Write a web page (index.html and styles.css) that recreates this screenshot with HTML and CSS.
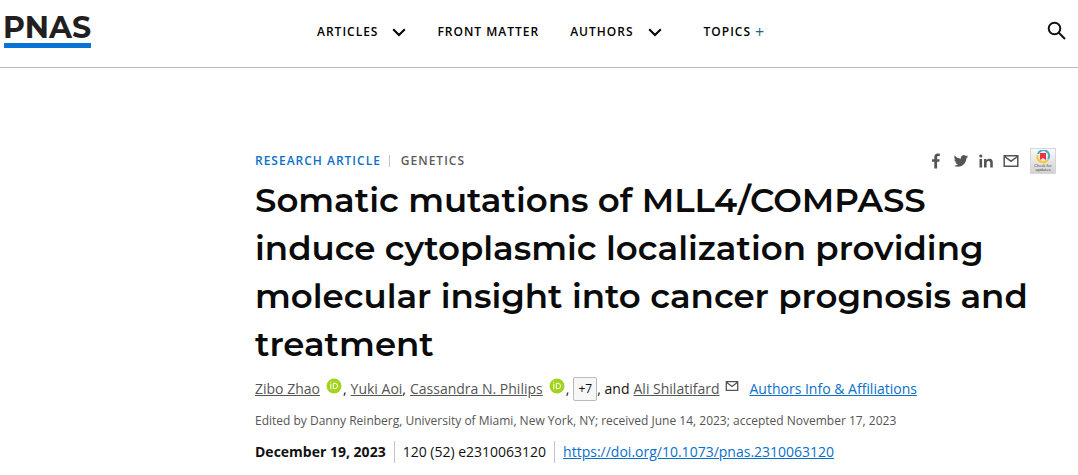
FILE: index.html
```html
<!DOCTYPE html>
<html lang="en">
<head>
<meta charset="utf-8">
<meta name="viewport" content="width=device-width, initial-scale=1">
<title>Somatic mutations of MLL4/COMPASS | PNAS</title>
<link rel="stylesheet" href="styles.css">
</head>
<body>
<header class="site-header">
  <a class="logo" href="#">PNAS</a>
  <nav class="main-nav" aria-label="Main">
    <button class="nav-item" type="button">ARTICLES
      <svg class="chevron" viewBox="0 0 14 9" aria-hidden="true"><path d="M1.200 1.200 7 7l5.800-5.800"/></svg>
    </button>
    <a class="nav-item" href="#">FRONT MATTER</a>
    <button class="nav-item" type="button">AUTHORS
      <svg class="chevron" viewBox="0 0 14 9" aria-hidden="true"><path d="M1.200 1.200 7 7l5.800-5.800"/></svg>
    </button>
    <button class="nav-item topics" type="button">TOPICS <span class="plus">+</span></button>
  </nav>
  <button class="search" type="button" aria-label="Search">
    <svg viewBox="0 0 20 20" aria-hidden="true"><circle cx="7.500" cy="7.500" r="5.800"/><path d="M11.800 11.800 18 18"/></svg>
  </button>
</header>
<main class="article">
  <div class="meta">
    <div class="labels">
      <a class="type" href="#">RESEARCH ARTICLE</a>
      <a class="subject" href="#">GENETICS</a>
    </div>
    <div class="share">
      <a href="#" aria-label="Facebook"><svg viewBox="0 0 16 16" aria-hidden="true"><path d="M6.300 15.500V8.800H4V6.300h2.300V4.200C6.300 1.900 7.700.6 9.800.6c.9 0 1.700.1 2 .2v2.300h-1.300c-1.100 0-1.400.6-1.400 1.400v1.800h2.600l-.4 2.500H9.100v6.700z"/></svg></a>
      <a href="#" aria-label="Twitter"><svg viewBox="0 0 16 16" aria-hidden="true"><path d="M15.200 3.400c-.5.3-1.100.4-1.700.5.600-.4 1.100-1 1.300-1.700-.6.400-1.200.6-1.900.8a3 3 0 0 0-5.100 2.700C5.300 5.600 3.100 4.400 1.700 2.600c-.8 1.400-.4 3.100.9 4-.5 0-.9-.2-1.300-.4 0 1.500 1 2.700 2.400 3-.5.1-.9.100-1.300 0 .4 1.200 1.500 2.100 2.800 2.100A6.100 6.100 0 0 1 .8 12.600c4.900 3 12.200.1 12.700-7.600.7-.4 1.300-1 1.700-1.600z"/></svg></a>
      <a href="#" aria-label="LinkedIn"><svg viewBox="0 0 16 16" aria-hidden="true"><circle cx="2.800" cy="3" r="1.600"/><path d="M1.500 6h2.600v8.500H1.500zM6 6h2.500v1.200c.5-.9 1.500-1.500 2.800-1.500 2.700 0 3.500 1.500 3.500 4v4.800h-2.600v-4.400c0-1.200-.2-2.200-1.600-2.200-1.500 0-2 1-2 2.300v4.300H6z"/></svg></a>
      <a href="#" aria-label="Email"><svg class="mail" viewBox="0 0 16 16" aria-hidden="true"><path d="M1.200 2.700h13.600v10.600H1.200zM1.500 3.500 8 8.200l6.500-4.700"/></svg></a>
      <button class="crossmark" type="button">
        <svg viewBox="0 0 16 14" aria-hidden="true"><path class="ring-blue" d="M3 4A5.700 5.700 0 1 1 13 9.200"/><path class="ring-yellow" d="M12.800 9.700A5.700 5.700 0 0 1 2.600 5"/><path class="mark" d="M5 3h6v7L8 7.900 5 10z"/></svg>
        <span>Check for<br>updates</span>
      </button>
    </div>
  </div>
  <h1>Somatic mutations of MLL4/COMPASS induce cytoplasmic localization providing molecular insight into cancer prognosis and treatment</h1>
  <div class="authors">
    <span class="author"><a href="#">Zibo Zhao</a><a class="orcid" href="#" aria-label="Zibo Zhao ORCID"><svg viewBox="0 0 16 16" aria-hidden="true"><circle cx="8" cy="8" r="7.500"/><path d="M4.800 5.800v5.400M7.300 5.300v5.400h1.500c3.600 0 3.600-5.400 0-5.400zM4.800 3.600v1"/></svg></a>,</span>
    <span class="author"><a href="#">Yuki Aoi</a>,</span>
    <span class="author"><a href="#">Cassandra N. Philips</a><a class="orcid" href="#" aria-label="Cassandra N. Philips ORCID"><svg viewBox="0 0 16 16" aria-hidden="true"><circle cx="8" cy="8" r="7.500"/><path d="M4.800 5.800v5.400M7.300 5.300v5.400h1.500c3.600 0 3.600-5.400 0-5.400zM4.800 3.600v1"/></svg></a>,</span>
    <span class="author"><button class="more" type="button">+7</button>, and</span>
    <span class="author"><a href="#">Ali Shilatifard</a><a class="contact" href="#" aria-label="Email Ali Shilatifard"><svg class="mail" viewBox="0 0 16 16" aria-hidden="true"><path d="M1.500 3h13v10h-13zM2 4l6 4.500L14 4"/></svg></a></span>
    <a class="info" href="#">Authors Info &amp; Affiliations</a>
  </div>
  <p class="history">Edited by Danny Reinberg, University of Miami, New York, NY; received June 14, 2023; accepted November 17, 2023</p>
  <div class="citation">
    <strong>December 19, 2023</strong>
    <span>120 (52) e2310063120</span>
    <span><a href="#">https://doi.org/10.1073/pnas.2310063120</a></span>
  </div>
</main>
</body>
</html>
```
FILE: styles.css
```css
* { box-sizing: border-box; }
body {
  margin: 0;
  background: #fff;
  color: #111;
  font-family: "Open Sans", "Noto Sans", sans-serif;
  font-size: 14px;
  line-height: 20px;
}
button {
  padding: 0;
  border: 0;
  background: none;
  color: inherit;
  font: inherit;
  cursor: pointer;
}
svg { display: block; }

.site-header {
  display: flex;
  align-items: flex-start;
  padding: 14px 11px 19px 3px;
  border-bottom: 1px solid #bcbcbc;
}
.logo {
  width: 88px;
  padding-bottom: 6px;
  background: linear-gradient(#0a74d6, #0a74d6) right bottom / 87px 5px no-repeat;
  color: #231f20;
  font-family: Montserrat, Inter, sans-serif;
  font-size: 30px;
  font-weight: 700;
  line-height: 28px;
  text-decoration: none;
}
.main-nav {
  display: flex;
  flex: 1;
  gap: 31px;
  padding: 8px 0 0 226px;
}
.nav-item {
  display: flex;
  align-items: center;
  gap: 14px;
  color: #000;
  font-size: 12px;
  font-weight: 600;
  letter-spacing: 1px;
  line-height: 20px;
  text-decoration: none;
  white-space: nowrap;
}
.chevron { width: 14px; height: 9px; }
.chevron path { fill: none; stroke: #000; stroke-width: 2; }
.topics { gap: 4px; margin-left: 11px; }
.plus { color: #236281; font-size: 16px; font-weight: 400; }
.search { padding-top: 7px; }
.search svg { width: 20px; height: 20px; fill: none; stroke: #111; stroke-width: 2; }

.article { padding: 80px 22px 12px 255px; }
.meta {
  display: flex;
  align-items: center;
  justify-content: space-between;
}
.labels { display: flex; font-size: 12px; font-weight: 600; letter-spacing: 1px; line-height: 12px; }
.labels a { text-decoration: none; }
.type { color: #0a70c9; }
.subject { margin-left: 8px; padding-left: 11px; border-left: 1px solid #c4c4c4; color: #5c5c5c; }
.share { display: flex; align-items: center; gap: 9px; }
.share a { color: #555; }
.share a svg { width: 16px; height: 16px; fill: currentColor; }
.share a .mail, .mail { fill: none; stroke: #555; stroke-width: 1.500; }
.crossmark {
  width: 26px;
  height: 26px;
  margin-left: 2px;
  border: 1px solid #d6d6d6;
  background: linear-gradient(#fafafa, #d2d2d2);
  color: #333;
  font-size: 4px;
  line-height: 4px;
}
.crossmark svg { width: 16px; height: 14px; margin: 0 auto; fill: none; stroke-width: 2; }
.crossmark span { display: block; }
.ring-blue { stroke: #3eb1c8; }
.ring-yellow { stroke: #ffc72c; }
.crossmark .mark { fill: #ef3340; }

h1 {
  max-width: 780px;
  margin: 2px 0 0;
  color: #0b0b0b;
  font-family: Montserrat, Inter, sans-serif;
  font-size: 34px;
  font-weight: 600;
  line-height: 48px;
}
.authors {
  display: flex;
  flex-wrap: wrap;
  align-items: center;
  gap: 4px;
  margin-top: 9px;
}
.author { display: flex; align-items: center; }
.author a { color: #555; }
.orcid { margin: 0 1px 6px 6px; }
.orcid svg { width: 16px; height: 16px; }
.orcid path { fill: none; stroke: #fff; stroke-width: 1; }
.orcid circle { fill: #a3d41d; }
.more {
  width: 24px;
  height: 24px;
  border: 1px solid #bbb;
  border-radius: 2px;
  background: #f7f7f7;
  font-size: 12px;
}
.contact { margin: 0 6px 6px 6px; }
.contact svg { width: 14px; height: 14px; }
.info, .citation a { color: #0a70c9; }
.history {
  margin: 10px 0 0;
  color: #555;
  font-size: 12px;
  line-height: 20px;
}
.citation { display: flex; flex-wrap: wrap; margin-top: 10px; line-height: 22px; }
.citation span { margin-left: 8px; padding-left: 8px; border-left: 1px solid #c4c4c4; }
```
